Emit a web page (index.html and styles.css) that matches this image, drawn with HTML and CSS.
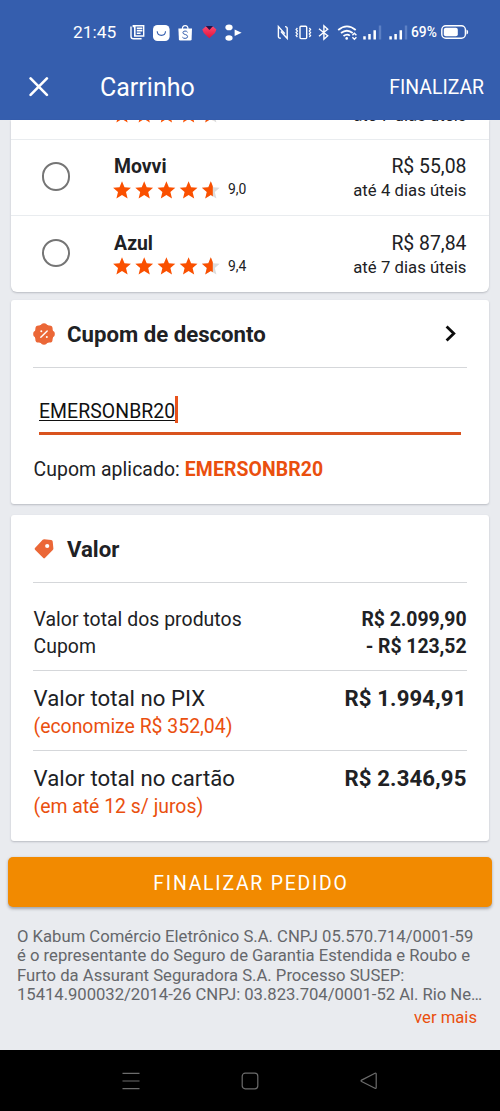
FILE: index.html
```html
<!DOCTYPE html>
<html lang="pt-BR">
<head>
<meta charset="utf-8">
<meta name="viewport" content="width=device-width, initial-scale=1">
<title>Carrinho</title>
<link rel="stylesheet" href="styles.css">
</head>
<body>
<svg class="defs" width="0" height="0" aria-hidden="true">
  <defs>
    <linearGradient id="heart" x1="0" y1="0" x2="0" y2="1"><stop offset="0" stop-color="#ff4a72"/><stop offset="1" stop-color="#e01238"/></linearGradient>
    <path id="star" d="M9 .2 L11.5 6.3 L17.9 6.7 L13 10.9 L14.6 17.5 L9 14 L3.4 17.5 L5 10.9 L.1 6.7 L6.5 6.3 Z"/>
    <clipPath id="most"><rect width="11" height="18"/></clipPath>
    <g id="rating">
      <use href="#star"/><use href="#star" x="22.2"/><use href="#star" x="44.4"/><use href="#star" x="66.6"/>
      <g transform="translate(88.8 0)"><use href="#star" fill="#dcdcdc"/><use href="#star" clip-path="url(#most)"/></g>
    </g>
  </defs>
</svg>
<div class="screen">
  <header class="top">
    <div class="status">
      <span class="clock">21:45</span>
      <svg class="status-icons" width="112" height="20" viewBox="0 0 112 20" fill="none">
        <path d="M1 5.4V15.2Q1 17.8 3.6 17.8H11.6" stroke="#fff" stroke-width="1.4"/>
        <path fill="#fff" fill-rule="evenodd" d="M2.6 4H14.4V15.8H4V6.2H2.6ZM5.6 5.4V14.3H13V5.4ZM6.8 6.6H12.4V8.2H6.8ZM6.8 9.1H12.4V10.6H6.8ZM6.8 11.5H10.6V12.9H6.8Z"/>
        <rect x="23" y="4" width="16.6" height="16" rx="4.5" fill="#fff"/>
        <path d="M27.2 10.3Q27.4 14.4 31.4 14.4T35.5 10.3" stroke="#355eae" stroke-width="1.1"/>
        <path d="M52.4 8Q52.4 4.7 55.2 4.7T58 8" stroke="#fff" stroke-width="1.2"/>
        <path d="M48.4 7.6H62L61.6 18.2Q61.5 19.4 60.2 19.4H50.2Q49 19.4 48.9 18.2Z" fill="#fff"/>
        <path d="M57.6 11.3Q56.8 10 55 10 52.8 10.1 52.9 11.8 53.1 13.1 55.3 13.5 57.7 14 57.6 15.7 57.4 17.4 55.1 17.4 53.4 17.4 52.4 16.2" stroke="#355eae" stroke-width="1"/>
        <path d="M72.3 8.6L76 5.2 79.4 7.4 82.8 5.2 86.4 8.6 85 12 79.3 17.2 73.8 12Z" fill="url(#heart)"/>
        <path d="M75.8 5H83L79.4 9Z" fill="#251448"/>
        <ellipse cx="99" cy="6.4" rx="3.6" ry="2.8" fill="#fff"/><ellipse cx="99" cy="17" rx="3.6" ry="2.8" fill="#fff"/>
        <path d="M104.6 8.6L111.6 11.8 104.6 15Z" fill="#fff"/>
      </svg>
      <svg class="system-icons" width="133" height="20" viewBox="0 0 133 20" fill="none" stroke="#fff" stroke-width="1.4">
        <path d="M4.8 17.2Q2.4 17.2 2.4 15.6V5.6L8.8 12.6M9 5.6Q11.2 5.6 11.2 7.4V17.4L4.9 10.6"/>
        <rect x="24" y="5.2" width="6.7" height="12.4" rx="1"/>
        <path d="M21.4 7L20.1 8.5 21.4 10 20.1 11.5 21.4 13 20.1 14.5 21.4 16M33.3 7L34.6 8.5 33.3 10 34.6 11.5 33.3 13 34.6 14.5 33.3 16" stroke-width="1.2"/>
        <path d="M43 7.8L51.7 14.8 47.9 18.2V4.8L51.7 8.2 43 15.2"/>
        <path d="M62.2 9Q71 1.8 79.7 9M65 12Q71 7.4 76.7 12M67.5 15Q71 12.4 73.9 14.6" stroke-width="1.8"/>
        <circle cx="70.7" cy="17.4" r="1.3" fill="#fff" stroke="none"/>
        <path d="M76.4 14.2L78.4 12.2 80.4 14.2M76.4 16.2L78.4 18.2 80.4 16.2" stroke-width="1.4"/>
        <path d="M88.5 18.4V15.2M93.5 18.4V13M98.7 18.4V9.2M114.6 18.4V15.2M119.6 18.4V13M124.8 18.4V9.2" stroke-width="2.5"/>
        <path d="M104 18.4V4.4M130 18.4V4.4" stroke="#5d80c4" stroke-width="2.4"/>
      </svg>
      <span class="percent">69%</span>
      <svg class="battery" width="28" height="14" viewBox="0 0 28 14">
        <rect x=".8" y=".8" width="23.6" height="12.4" rx="4" fill="none" stroke="#fff" stroke-width="1.4"/>
        <rect x="2.8" y="2.7" width="14" height="8.6" rx="2" fill="#fff"/>
        <path d="M25.5 4.5Q27.2 5 27.2 7T25.5 9.5Z" fill="#fff"/>
      </svg>
    </div>
    <div class="toolbar">
      <svg class="close" width="20" height="20" viewBox="0 0 20 20"><path d="M1.6 1.4L17.9 17.9M17.9 1.4L1.6 17.9" stroke="#fff" stroke-width="2.6" stroke-linecap="round"/></svg>
      <h1 class="title">Carrinho</h1>
      <span class="finish">FINALIZAR</span>
    </div>
  </header>

  <main class="content">
    <section class="card shipping">
      <div class="option scrolled">
        <svg class="stars" width="107" height="18"><use href="#rating"/></svg>
        <span class="term">até 7 dias úteis</span>
      </div>
      <div class="option">
        <span class="radio"></span>
        <div class="carrier"><b class="name">Movvi</b><span class="score"><svg class="stars" width="107" height="18"><use href="#rating"/></svg>9,0</span></div>
        <div class="cost"><span class="price">R$ 55,08</span><span class="term">até 4 dias úteis</span></div>
      </div>
      <div class="option">
        <span class="radio"></span>
        <div class="carrier"><b class="name">Azul</b><span class="score"><svg class="stars" width="107" height="18"><use href="#rating"/></svg>9,4</span></div>
        <div class="cost"><span class="price">R$ 87,84</span><span class="term">até 7 dias úteis</span></div>
      </div>
    </section>

    <section class="card coupon">
      <div class="heading">
        <svg width="22" height="22" viewBox="0 0 22 22">
          <g fill="#eb6737"><circle cx="11" cy="11" r="9.7"/><circle cx="11" cy="3.4" r="3.2"/><circle cx="16.4" cy="5.6" r="3.2"/><circle cx="18.6" cy="11" r="3.2"/><circle cx="16.4" cy="16.4" r="3.2"/><circle cx="11" cy="18.6" r="3.2"/><circle cx="5.6" cy="16.4" r="3.2"/><circle cx="3.4" cy="11" r="3.2"/><circle cx="5.6" cy="5.6" r="3.2"/></g>
          <path d="M7.8 14.3L14.2 7.9" stroke="#fff" stroke-width="1.4" stroke-linecap="round"/><circle cx="8.3" cy="8.2" r="1" fill="#fff"/><circle cx="13.8" cy="13.9" r="1" fill="#fff"/>
        </svg>
        <h2>Cupom de desconto</h2>
        <svg class="chevron" width="12" height="18" viewBox="0 0 12 18"><path d="M1.6 1.5L8.8 8.5 1.6 15.5" fill="none" stroke="#0c0c0c" stroke-width="2.8"/></svg>
      </div>
      <div class="field"><span class="code">EMERSONBR20</span><span class="caret"></span></div>
      <p class="applied">Cupom aplicado: <b>EMERSONBR20</b></p>
    </section>

    <section class="card totals">
      <div class="heading">
        <svg width="22" height="22" viewBox="0 0 22 22"><path d="M9.7 1.8Q10.3 1.2 11.2 1.2L18.2 2Q19.6 2.1 19.7 3.5L20.4 10.5Q20.5 11.4 19.8 12L11.9 20Q11.1 20.8 10.3 20L2 11.7Q1.2 10.8 2 10Z" fill="#eb6737"/><circle cx="14.2" cy="8" r="2.1" fill="#fff"/></svg>
        <h2>Valor</h2>
      </div>
      <dl class="lines">
        <div><dt>Valor total dos produtos</dt><dd>R$ 2.099,90</dd></div>
        <div><dt>Cupom</dt><dd>- R$ 123,52</dd></div>
      </dl>
      <div class="total"><div class="sum"><span>Valor total no PIX</span><b>R$ 1.994,91</b></div><p>(economize R$ 352,04)</p></div>
      <div class="total"><div class="sum"><span>Valor total no cartão</span><b>R$ 2.346,95</b></div><p>(em até 12 s/ juros)</p></div>
    </section>

    <button class="submit">FINALIZAR PEDIDO</button>
    <p class="legal">O Kabum Comércio Eletrônico S.A. CNPJ 05.570.714/0001-59<br>é o representante do Seguro de Garantia Estendida e Roubo e<br>Furto da Assurant Seguradora S.A. Processo SUSEP:<br><span class="last">15414.900032/2014-26 CNPJ: 03.823.704/0001-52 Al. Rio Ne…</span></p>
    <span class="more">ver mais</span>
  </main>

  <nav class="navbar">
    <svg width="20" height="20" viewBox="0 0 20 20"><path d="M1.5 2.3H18.5M1.5 10H18.5M1.5 17.6H18.5"/></svg>
    <svg width="20" height="20" viewBox="0 0 20 20"><rect x="2.2" y="2.2" width="15.6" height="15.6" rx="3"/></svg>
    <svg width="20" height="20" viewBox="0 0 20 20"><path d="M16 2.3Q17.2 1.8 17.2 3V16.6Q17.2 17.8 16 17.2L2.6 10.6Q1.5 9.8 2.6 9.1Z"/></svg>
  </nav>
</div>
</body>
</html>
```
FILE: styles.css
```css
* { box-sizing: border-box; margin: 0; padding: 0; }
body { font-family: Roboto, "Liberation Sans", sans-serif; color: #202124; background: #e9ebef; }
.defs { position: absolute; }
.screen { display: flex; flex-direction: column; width: 500px; height: 1111px; overflow: hidden; background: #e9ebef; }
h1, h2, dt, dd, p, span { white-space: nowrap; }

.top { flex: none; height: 120px; padding-top: 20px; background: #355eae; color: #fff; }
.status { display: flex; align-items: center; height: 24px; padding-left: 73px; }
.clock { width: 57px; font-size: 17.4px; letter-spacing: 0; }
.status-icons { margin-top: -2px; }
.system-icons { margin: -2px 0 0 34px; }
.percent { width: 29px; margin-left: 2px; font-size: 13.8px; font-weight: 500; }
.battery { margin-left: 1px; }
.toolbar { display: flex; align-items: center; height: 68px; margin-top: 9px; padding: 0 16px 0 29px; }
.title { margin-left: 51px; font-size: 25px; font-weight: 400; }
.finish { margin-left: auto; font-size: 19.4px; }

.content { flex: none; display: flex; flex-direction: column; height: 930px; padding: 0 11px; }
.card { flex: none; background: #fff; border-radius: 3px; box-shadow: 0 1px 2px rgba(60, 64, 80, .28); }
.shipping { display: flex; flex-direction: column; justify-content: flex-end; height: 171.5px; overflow: hidden; border-radius: 0 0 6px 6px; }
.option { flex: none; display: flex; height: 76.5px; padding: 15.5px 22.5px 0 30.5px; border-top: 1.5px solid #e9ecef; }
.scrolled { align-items: flex-end; justify-content: space-between; height: 45px; padding: 0 22.5px 10px 102px; border-top: 0; }
.radio { width: 28.4px; height: 28.4px; margin-top: 7.3px; border: 2.8px solid #757575; border-radius: 50%; }
.carrier { display: flex; flex-direction: column; margin-left: 43.1px; }
.name { padding-left: 1px; font-size: 19.4px; line-height: 24px; }
.score { display: flex; gap: 8px; font-size: 13.9px; line-height: 20px; }
.stars { margin-top: 1.5px; fill: #fa5000; }
.scrolled .stars { margin: 0 0 6px; }
.cost { display: flex; flex-direction: column; margin-left: auto; text-align: right; }
.price { font-size: 19.4px; line-height: 24px; }
.term { font-size: 16.67px; line-height: 24.5px; letter-spacing: .06px; }

.coupon { height: 204px; margin-top: 8.5px; padding: 0 22px; }
.heading { display: flex; align-items: center; height: 67.5px; padding-top: 1px; border-bottom: 1.5px solid #d5d7da; }
.heading h2 { margin-left: 12px; font-size: 22.2px; font-weight: 700; }
.chevron { margin: 0 10px 0 auto; }
.field { display: flex; align-items: flex-end; height: 67px; margin: 0 6px; padding-bottom: 8px; border-bottom: 3px solid #d9531e; }
.code { font-size: 19.4px; line-height: 25px; letter-spacing: .08px; color: #111; text-decoration: underline; text-decoration-thickness: 1px; text-underline-offset: 2px; }
.caret { width: 3px; height: 27px; margin: 0 0 1px; background: #e8531c; }
.applied { margin-top: 22.5px; padding-left: .5px; font-size: 19.4px; line-height: 26px; letter-spacing: .07px; }
.applied b { color: #ea4f0e; letter-spacing: .12px; }

.totals { height: 325.5px; margin-top: 11px; padding: 0 22px; }
.lines { height: 87.5px; padding: 24.5px .5px 0; font-size: 19.4px; line-height: 26.5px; letter-spacing: .04px; }
.lines div { display: flex; justify-content: space-between; }
.lines dd { font-weight: 700; letter-spacing: -.04px; }
.total { height: 80px; padding: 13px .5px 0; border-top: 1.5px solid #d5d7da; }
.sum { display: flex; justify-content: space-between; font-size: 22.2px; line-height: 28px; letter-spacing: .03px; }
.sum b { letter-spacing: .12px; }
.total p { padding-top: .8px; font-size: 19.4px; line-height: 27px; color: #ea4f0e; }

.submit { flex: none; height: 50px; margin: 16.5px -3px 0; padding: 2px 0 0 2px; border: 0; border-radius: 5px; background: #f28a00; color: #fff; font: 400 19.4px Roboto, sans-serif; letter-spacing: 1.78px; box-shadow: 0 1.5px 3px rgba(60, 64, 80, .4); }
.legal { margin: 19.5px 0 0 6px; font-size: 16.67px; line-height: 19.5px; color: #65676b; }
.last { letter-spacing: -.03px; }
.more { align-self: flex-end; margin: 2px 12px 0 0; font-size: 16.67px; line-height: 22px; color: #ea4f0e; }

.navbar { flex: 1; display: flex; justify-content: center; align-items: center; gap: 99px; background: #000; }
.navbar svg { fill: none; stroke: #6c6c6c; stroke-width: 1.2; }
```
